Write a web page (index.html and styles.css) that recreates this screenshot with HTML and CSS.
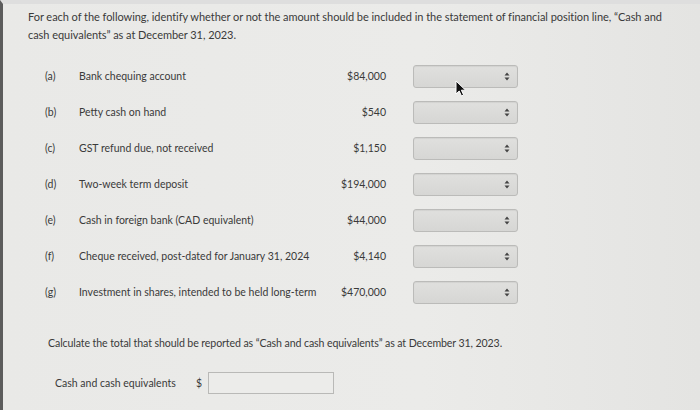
FILE: index.html
```html
<!DOCTYPE html>
<html>
<head>
<meta charset="utf-8">
<link rel="stylesheet" href="styles.css">
</head>
<body>
<div class="frame">
  <p class="intro">For each of the following, identify whether or not the amount should be included in the statement of financial position line, “Cash and cash equivalents” as at December 31, 2023.</p>

  <div class="items">
    <div class="row"><span class="lbl">(a)</span><span class="desc">Bank chequing account</span><span class="amt">$84,000</span><span class="sel"><svg class="arr" width="6" height="9" viewBox="0 0 6 9"><path d="M3 0.5L5.5 3.5H0.5Z M3 8.5L5.5 5.5H0.5Z" fill="#444"/></svg></span></div>
    <div class="row"><span class="lbl">(b)</span><span class="desc">Petty cash on hand</span><span class="amt">$540</span><span class="sel"><svg class="arr" width="6" height="9" viewBox="0 0 6 9"><path d="M3 0.5L5.5 3.5H0.5Z M3 8.5L5.5 5.5H0.5Z" fill="#444"/></svg></span></div>
    <div class="row"><span class="lbl">(c)</span><span class="desc">GST refund due, not received</span><span class="amt">$1,150</span><span class="sel"><svg class="arr" width="6" height="9" viewBox="0 0 6 9"><path d="M3 0.5L5.5 3.5H0.5Z M3 8.5L5.5 5.5H0.5Z" fill="#444"/></svg></span></div>
    <div class="row"><span class="lbl">(d)</span><span class="desc">Two-week term deposit</span><span class="amt">$194,000</span><span class="sel"><svg class="arr" width="6" height="9" viewBox="0 0 6 9"><path d="M3 0.5L5.5 3.5H0.5Z M3 8.5L5.5 5.5H0.5Z" fill="#444"/></svg></span></div>
    <div class="row"><span class="lbl">(e)</span><span class="desc">Cash in foreign bank (CAD equivalent)</span><span class="amt">$44,000</span><span class="sel"><svg class="arr" width="6" height="9" viewBox="0 0 6 9"><path d="M3 0.5L5.5 3.5H0.5Z M3 8.5L5.5 5.5H0.5Z" fill="#444"/></svg></span></div>
    <div class="row"><span class="lbl">(f)</span><span class="desc">Cheque received, post-dated for January 31, 2024</span><span class="amt">$4,140</span><span class="sel"><svg class="arr" width="6" height="9" viewBox="0 0 6 9"><path d="M3 0.5L5.5 3.5H0.5Z M3 8.5L5.5 5.5H0.5Z" fill="#444"/></svg></span></div>
    <div class="row"><span class="lbl">(g)</span><span class="desc">Investment in shares, intended to be held long-term</span><span class="amt">$470,000</span><span class="sel"><svg class="arr" width="6" height="9" viewBox="0 0 6 9"><path d="M3 0.5L5.5 3.5H0.5Z M3 8.5L5.5 5.5H0.5Z" fill="#444"/></svg></span></div>
  </div>

  <p class="calc">Calculate the total that should be reported as “Cash and cash equivalents” as at December 31, 2023.</p>

  <div class="total">
    <span class="tlabel">Cash and cash equivalents</span>
    <span class="dollar">$</span>
    <span class="input"></span>
  </div>

  <svg class="cursor" width="12" height="17" viewBox="0 0 12 17"><path d="M1 1V14L4.2 11L6.5 16L8.6 15L6.4 10.2H10.6Z" fill="#111" stroke="#fff" stroke-width="1"/></svg>
</div>
</body>
</html>
```

FILE: styles.css
```css
html, body {
  margin: 0;
  padding: 0;
}
body {
  width: 700px;
  height: 410px;
  overflow: hidden;
  background: #e8e8e6;
  font-family: Lato, "Open Sans", sans-serif;
  color: #3a3a3a;
}
.frame {
  position: relative;
  box-sizing: border-box;
  height: 410px;
  border-left: 3px solid #5c5c5c;
  border-top: 4px solid #dedede;
  background: linear-gradient(90deg, #e9e9e7 0%, #ebebe9 60%, #e4e4e2 100%);
}
.intro {
  margin: 0;
  padding: 4px 0 0 25px;
  width: 650px;
  font-size: 11px;
  line-height: 18px;
  letter-spacing: -0.05px;
}
.items {
  display: flex;
  flex-direction: column;
  margin-top: 14px;
}
.row {
  display: flex;
  align-items: center;
  height: 36px;
  padding-left: 42px;
  font-size: 10.5px;
}
.lbl {
  width: 34px;
  flex: none;
}
.desc {
  width: 237px;
  flex: none;
  white-space: nowrap;
}
.amt {
  width: 70px;
  flex: none;
  text-align: right;
}
.sel {
  display: flex;
  align-items: center;
  justify-content: flex-end;
  box-sizing: border-box;
  margin-left: 27px;
  width: 105px;
  height: 23px;
  padding-right: 7px;
  border: 1px solid #bbbbb9;
  border-radius: 3px;
  background: linear-gradient(180deg, #e0e0de 0%, #d6d6d4 100%);
  box-shadow: inset 0 1px 1px rgba(0,0,0,0.06);
}
.arr {
  display: block;
}
.calc {
  margin: 26px 0 0 45px;
  font-size: 10.6px;
  line-height: 14px;
  letter-spacing: -0.1px;
}
.total {
  display: flex;
  align-items: center;
  margin-top: 22px;
  padding-left: 52px;
  font-size: 10.5px;
}
.tlabel {
  width: 141px;
}
.dollar {
  width: 12px;
}
.input {
  box-sizing: border-box;
  width: 126px;
  height: 22px;
  border: 1px solid #b9b9b7;
  background: #ececea;
}
.cursor {
  position: absolute;
  left: 452px;
  top: 76px;
}
```
